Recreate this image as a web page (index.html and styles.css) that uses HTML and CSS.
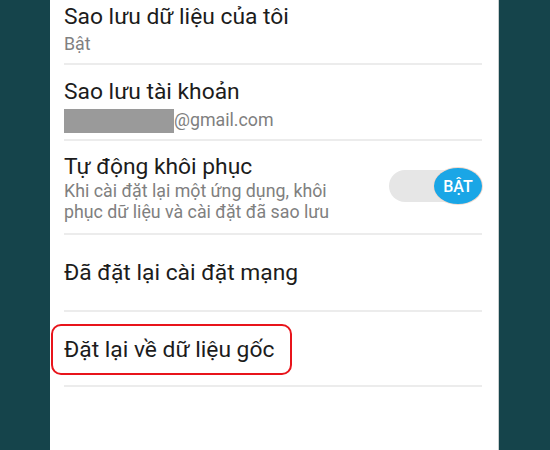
FILE: index.html
```html
<!DOCTYPE html>
<html lang="vi">
<head>
<meta charset="utf-8">
<link rel="stylesheet" href="styles.css">
</head>
<body>
<div class="screen">
  <div class="panel">
    <div class="row row-first">
      <div class="title">Sao lưu dữ liệu của tôi</div>
      <div class="sub">Bật</div>
    </div>
    <div class="row row-account">
      <div class="title">Sao lưu tài khoản</div>
      <div class="sub email"><span class="mask"></span>@gmail.com</div>
    </div>
    <div class="row row-toggle">
      <div class="text">
        <div class="title">Tự động khôi phục</div>
        <div class="sub">Khi cài đặt lại một ứng dụng, khôi<br>phục dữ liệu và cài đặt đã sao lưu</div>
      </div>
      <div class="switch">
        <span class="knob">BẬT</span>
      </div>
    </div>
    <div class="row row-single">
      <div class="title">Đã đặt lại cài đặt mạng</div>
    </div>
    <div class="row row-highlight">
      <div class="title"><span class="mark">Đặt lại về dữ liệu gốc</span></div>
    </div>
  </div>
</div>
</body>
</html>
```
FILE: styles.css
```css
html, body {
  margin: 0;
  padding: 0;
}
body {
  background: #15444b;
  width: 550px;
  height: 450px;
  overflow: hidden;
  font-family: Roboto, "Noto Sans", "Liberation Sans", sans-serif;
}
.screen {
  display: flex;
  height: 450px;
}
.panel {
  margin-left: 50px;
  width: 449px;
  height: 450px;
  background: #ffffff;
  border-right: 1px solid #c9cfcf;
  padding-left: 14px;
  padding-right: 16px;
  box-sizing: border-box;
}
.row {
  border-bottom: 2px solid #ececec;
}
.title {
  font-size: 22.8px;
  line-height: 26px;
  color: #1c1c1c;
}
.sub {
  font-size: 17.8px;
  line-height: 21px;
  color: #808080;
}
.row-first {
  padding-top: 4px;
  padding-bottom: 9px;
}
.row-first .sub {
  margin-top: 3px;
}
.row-account {
  padding-top: 14px;
  padding-bottom: 9px;
}
.row-account .sub {
  margin-top: 4px;
}
.email {
  display: flex;
  align-items: center;
  height: 21px;
}
.mask {
  display: inline-block;
  width: 110px;
  height: 24px;
  background: #9a9a9a;
  margin-top: 2px;
}
.row-toggle {
  display: flex;
  align-items: center;
  justify-content: space-between;
  padding-top: 13px;
  padding-bottom: 11px;
}
.switch {
  position: relative;
  width: 90px;
  height: 32px;
  background: #e6e6e6;
  border-radius: 16px;
  margin-top: -4px;
  margin-right: 3px;
}
.knob {
  position: absolute;
  right: -3px;
  top: -2px;
  width: 48px;
  height: 36px;
  border-radius: 50%;
  background: #1aa6e6;
  box-shadow: 0 0 0 1px #f3dcd0;
  color: #ffffff;
  font-size: 16px;
  font-weight: 500;
  display: flex;
  align-items: center;
  justify-content: center;
}
.row-single {
  padding-top: 25px;
  padding-bottom: 24px;
}
.row-highlight {
  padding-top: 12px;
  padding-bottom: 10px;
}
.mark {
  display: inline-block;
  border: 2px solid #e8141b;
  border-radius: 10px;
  padding: 11px 16px 10px 11px;
  margin-left: -13px;
}
```
